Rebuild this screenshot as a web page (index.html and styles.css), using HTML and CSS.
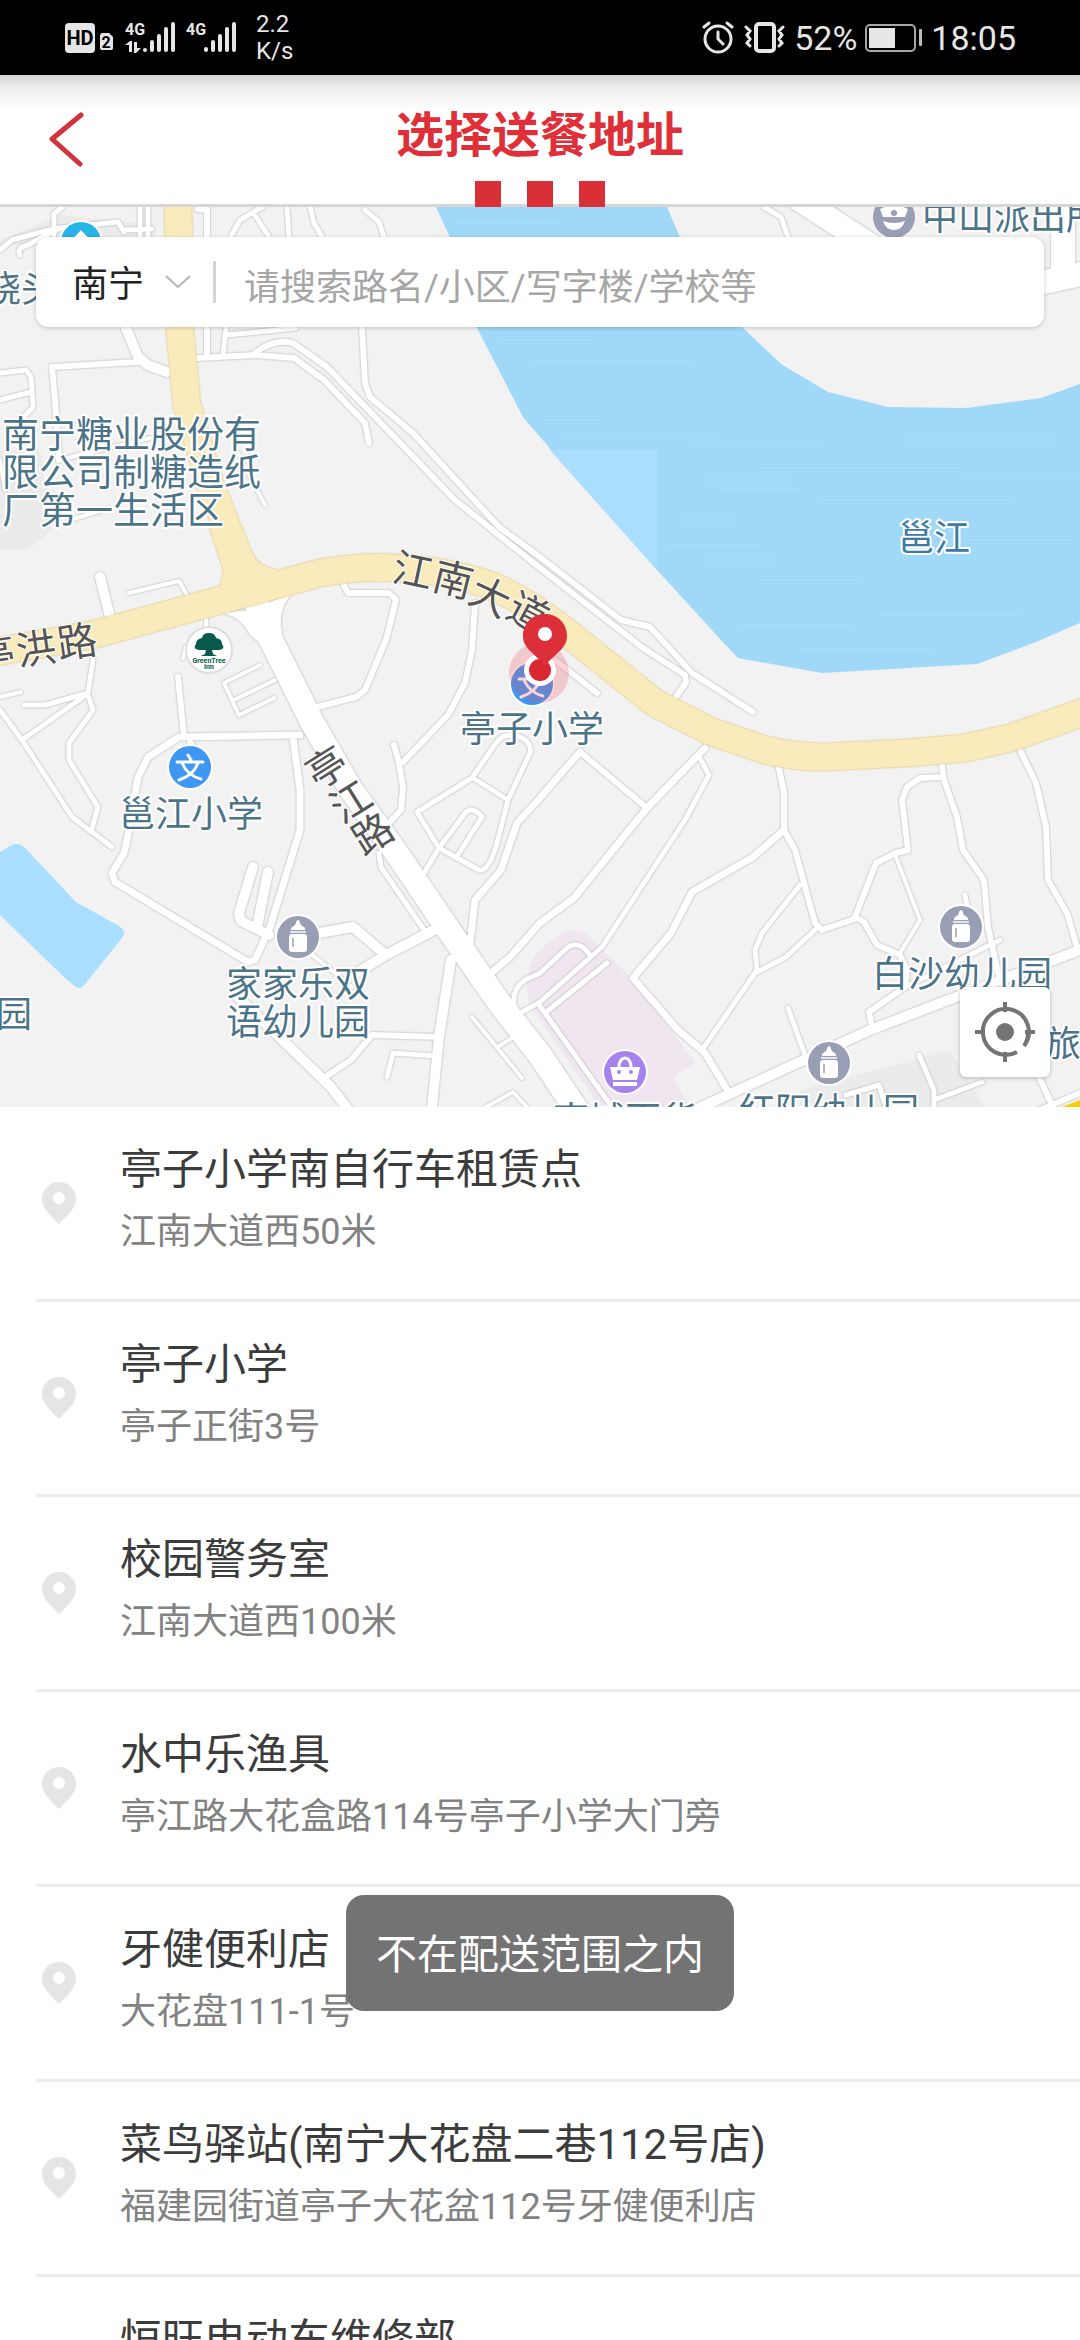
FILE: index.html
```html
<!DOCTYPE html>
<html lang="zh-CN">
<head>
    <meta charset="UTF-8">
    <meta name="viewport" content="width=device-width, initial-scale=1.0">
    <title>选择送餐地址</title>
    <link rel="stylesheet" href="styles.css">
</head>
<body>
    <!-- shared symbols -->
    <svg class="defs" aria-hidden="true">
        <symbol id="pin" viewBox="0 0 34 42">
            <path fill-rule="evenodd" d="M17 0C7.500 0 0 7.500 0 17c0 9 8 16 17 25 9-9 17-16 17-25C34 7.500 26.500 0 17 0zm0 10a6 6 0 1 1 0 12 6 6 0 0 1 0-12z"/>
        </symbol>
        <symbol id="bottle" viewBox="-24 -24 48 48">
            <circle r="23" fill="#fff"/>
            <circle r="21" fill="#989eb4"/>
            <path fill="#fff" d="M0-17c2 0 2 4 3 5l4 3v2H-7v-2l4-3c1-1 1-5 3-5z"/>
            <rect x="-8" y="-6" width="16" height="2" fill="#e4e6ee"/>
            <rect x="-9" y="-3" width="18" height="18" rx="3" fill="#fff"/>
            <path d="M-5 1V10" stroke="#989eb4" stroke-width="1.500"/>
        </symbol>
        <symbol id="school" viewBox="-24 -24 48 48">
            <circle r="23" fill="#fff"/>
            <circle r="21" fill="#3f97f4"/>
            <path d="M-13-5H13M-2-12L1-7M8-4C5 5-2 10-11 13M-8-4C-4 5 3 10 11 12" fill="none" stroke="#fff" stroke-width="3" stroke-linecap="round"/>
        </symbol>
    </svg>

    <div class="app">
        <div class="status-bar">
            <div class="status-group">
                <svg class="status-network" viewBox="64 20 176 36" fill="#e6e6e6">
                    <rect x="65" y="23" width="30" height="30" rx="4"/>
                    <text class="hd" x="80" y="45">HD</text>
                    <path d="M103 33h6l4 4v11a2 2 0 0 1-2 2h-9a2 2 0 0 1-2-2V36a3 3 0 0 1 3-3z"/>
                    <text class="sim" x="106" y="48">2</text>
                    <text class="net" x="125" y="35">4G</text>
                    <path d="M129 52V45h-4l5-4h2v11zM134 42h3v6h4l-5 5h-2z"/>
                    <path d="M145 50V50M152 42V50M159 36V50M166 29V50M173 24V50" class="bars"/>
                    <text class="net" x="186" y="35">4G</text>
                    <path d="M206 49V50M213 42V50M220 36V50M227 29V50M234 24V50" class="bars"/>
                </svg>
                <div class="speed">2.2<br>K/s</div>
            </div>
            <div class="status-group right">
                <svg class="status-alert" viewBox="704 20 84 36" fill="none" stroke="#e6e6e6" stroke-width="3" stroke-linecap="round">
                    <circle cx="720" cy="39" r="13"/>
                    <path d="M720 32V39L725 44M706 27L711 23M734 27L729 23"/>
                    <rect x="758" y="24" width="18" height="27" rx="3" stroke-width="4"/>
                    <path d="M748 27l4 4-3 4 3 4-3 4 3 3M785 27l-4 4 3 4-3 4 3 4-3 3"/>
                </svg>
                <span>52%</span>
                <svg class="status-battery" viewBox="864 23 58 30">
                    <rect x="865" y="25" width="49" height="26" rx="4" fill="none" stroke="#a8a8a8" stroke-width="2"/>
                    <rect x="868" y="28" width="26" height="20" fill="#e6e6e6"/>
                    <rect x="918" y="29" width="3" height="17" rx="1" fill="#bbb"/>
                </svg>
                <span class="time">18:05</span>
            </div>
        </div>

        <header class="header">
            <button class="back" type="button" aria-label="返回">
                <svg viewBox="0 0 36 56"><path d="M33 4L4 28L32 53"/></svg>
            </button>
            <h1>选择送餐地址</h1>
            <div class="awning"><i></i><i></i><i></i></div>
        </header>

        <section class="map">
            <svg class="map-canvas" viewBox="0 207 1080 900" role="img" aria-label="地图">
                <rect y="207" width="1080" height="900" fill="#f2f2f2"/>
                <path d="M0 240L60 215L155 225V245H0zM0 450H40L52 530L28 550H0zM800 1090L950 1050L985 1107H800z" fill="#ebebeb"/>
                <path d="M527 980Q530 950 560 935Q580 924 592 940L631 978L695 1062L673 1077L690 1107H600L540 1020Q525 1000 527 980z" fill="#efe6f0"/>

                <!-- river and pond -->
                <path d="M436 207L449 235L477 328L523 417L540 437L657 570L721 640L738 658L822 673L977 664L1036 642L1080 623V384L1041 398L967 408L888 407L828 392L781 364L743 328L679 235L667 207z" fill="#a0d8f7"/>
                <path d="M549 449H657V570z" fill="#aadeff"/>
                <g class="ripples">
                    <path d="M455 222H560M500 245H640M500 340H590M530 362H690M545 420H600M560 435H720M690 445H820M760 468H960M700 480H790M820 500H1010M680 520H740"/>
                    <path d="M720 490H800M900 440H1060M960 475H1080M700 560H780M760 580H860M880 615H1020M740 625H850M800 650H930M960 540H1070M670 545H760"/>
                </g>
                <path d="M0 852L10 846Q18 841 26 849L76 902L119 926Q127 931 122 938L85 984Q81 990 76 987L65 978L0 915z" fill="#aadeff"/>

                <!-- side streets, grouped by width -->
                <g class="streets">
                    <g stroke-width="4">
                        <path d="M59 460L150 438M238 453L265 505M129 593L179 581L188 597M260 665L224 683L239 715L274 698M234 700L275 680"/>
                        <path d="M896 857L920 920L900 953M183 658L186 647M0 697L21 692M472 1017L522 1078M498 1047L513 1037M486 1107L513 1092L527 1107"/>
                        <path d="M206 615V627M310 953L352 987M70 520L110 508M0 460L5 490"/>
                    </g>
                    <g stroke-width="5">
                        <path d="M54 240V214L62 207M0 250L12 240L45 231L60 228L118 222L124 232M20 255Q16 248 28 245L60 228M140 207V237M148 207V237M124 230L152 229"/>
                        <path d="M231 236L240 220L262 207M253 212L269 237M287 207L289 237M310 207L314 223L322 237M365 210L379 222L384 237"/>
                        <path d="M0 373L26 370L31 377L33 407L21 420M0 400L31 392M226 328L223 355M227 335L296 328"/>
                        <path d="M93 660L88 693L45 705L24 705M86 695L22 740M88 695L93 710L69 743L69 760L98 807L91 832M0 710L22 740L72 817L112 847"/>
                        <path d="M379 853L381 867L424 930M387 1077L393 1053L436 1056M424 873L439 848L466 812Q473 806 482 817L456 858"/>
                        <path d="M439 848L417 812L472 778L496 743Q506 730 522 738Q532 743 530 753L508 800L496 847Q488 872 479 870L439 848M473 778L508 800"/>
                        <path d="M698 755L709 775L685 820L602 947L540 1002L520 1013M515 1010Q510 990 525 980L540 973L568 947Q580 940 590 955M607 963L545 1013M540 1006L609 1103"/>
                        <path d="M800 885L762 933L755 950L757 970L702 1050M817 928L786 957L757 972M788 1008L805 1055M764 207L781 217L788 237M965 895L968 910M1000 940L905 987"/>
                        <path d="M919 1055L934 1090V1107M934 1100L982 1082M846 1095L879 1085L886 1107"/>
                    </g>
                    <g stroke-width="6">
                        <path d="M138 362L52 367L55 400L59 460M198 209L207 210V355M198 358L255 355L294 358L324 380L365 423L369 443"/>
                        <path d="M255 353Q275 338 293 343L327 367L455 500L540 568L643 648L685 675L686 682L674 700"/>
                        <path d="M362 328L365 383L370 397L413 433L499 527L540 557L621 620L650 627L662 640L692 673L753 712"/>
                        <path d="M343 583L348 593H389L396 600L386 640L365 690L356 697L317 707M475 603L472 650L465 683L448 715L403 762M394 745L399 763L403 787L401 810L389 823M178 677L184 737M190 742L196 750"/>
                        <path d="M325 1077L351 1060L372 1035L439 1037M555 660L597 693M580 752L647 808"/>
                        <path d="M778 763L784 793V830L795 850L815 923L822 930L857 918L864 922L877 945L900 955L907 970L905 987L869 1012L872 1027"/>
                        <path d="M855 917L876 863L896 853L908 850L902 800L907 787L920 778L943 777L942 763"/>
                        <path d="M943 777L957 817L963 850L984 880L988 927L998 973M1019 748L1036 783L1046 827L1048 880L1067 913L1077 947M1039 1077L1053 1107M1080 1093L1040 1110"/>
                    </g>
                    <g stroke-width="7">
                        <path d="M300 735L179 737L148 757L138 777L127 840L124 853L112 873L115 882L248 962L255 960L270 927L300 830V790L293 737"/>
                        <path d="M580 752L564 770L540 798L517 823L501 870L475 900L470 943M705 748L647 808L574 898L540 923L510 957L491 973"/>
                        <path d="M784 830L753 857L692 892L671 933L633 978L678 1030L705 1053L726 1088"/>
                    </g>
                    <g stroke-width="10">
                        <path d="M126 328L138 357L148 365L167 372M100 577L110 617M253 867L239 913L241 921L269 935M268 872L257 927M358 972L386 955M319 933L353 927L386 955L434 930M451 960L439 1037L432 1107"/>
                        <path d="M234 993L331 1087L350 1112M1090 946L870 1030L690 1112"/>
                    </g>
                    <g stroke-width="24">
                        <path d="M800 200L870 245M1063 200V272M1040 283L1090 272"/>
                        <path d="M255 600L271 640L312 722L350 788L398 855L448 929L500 1004L540 1055L580 1115"/>
                    </g>
                    <path class="junction" d="M225 613Q242 618 250 634L262 645L282 636Q276 612 290 595L270 602L268 606L245 611z"/>
                </g>

                <!-- avenue -->
                <g class="avenue">
                    <path d="M178 200L180 333L187 405L211 487L240 560L245 585M-10 653L96 634L217 601L320 573Q360 566 396 568Q440 569 490 585Q530 602 570 635L655 703L712 732L765 750Q795 757 825 757L905 753L965 748L1010 738L1090 710"/>
                    <path class="junction" d="M210 527L224 570Q225 586 205 604L260 602L300 590L276 570Q258 568 250 550L241 527z"/>
                </g>
                <path d="M1062 1107L1080 1100V1107z" fill="#f5d000"/>

                <!-- road names follow the bend, one glyph at a time -->
                <g class="road-name">
                    <text transform="translate(413 571) rotate(12)" y="14">江</text>
                    <text transform="translate(453 580) rotate(14)" y="14">南</text>
                    <text transform="translate(490 597) rotate(25)" y="14">大</text>
                    <text transform="translate(528 613) rotate(28)" y="14">道</text>
                    <text transform="translate(-5 655) rotate(-8)" y="14">亭</text>
                    <text transform="translate(36 649) rotate(-8)" y="14">洪</text>
                    <text transform="translate(77 642) rotate(-8)" y="14">路</text>
                    <text transform="translate(327 768) rotate(-32)" y="14">亭</text>
                    <text transform="translate(351 802) rotate(-32)" y="14">江</text>
                    <text transform="translate(373 834) rotate(-32)" y="14">路</text>
                </g>

                <g class="place">
                    <text class="estate" x="2" y="448">南宁糖业股份有</text>
                    <text class="estate" x="2" y="486">限公司制糖造纸</text>
                    <text class="estate" x="2" y="524">厂第一生活区</text>
                    <text x="-15" y="302">饶头</text>
                    <text x="922" y="230">中山派出所</text>
                    <text x="119" y="827">邕江小学</text>
                    <text x="460" y="742">亭子小学</text>
                    <text x="226" y="997">家家乐双</text>
                    <text x="226" y="1035">语幼儿园</text>
                    <text x="-4" y="1027">园</text>
                    <text x="872" y="987">白沙幼儿园</text>
                    <text x="739" y="1124">红阳幼儿园</text>
                    <text x="553" y="1133">南城百货</text>
                    <text x="1045" y="1057">旅馆</text>
                    <text class="river-name" x="898" y="551">邕江</text>
                </g>

                <!-- points of interest -->
                <use href="#school" x="166" y="743" width="48" height="48"/>
                <use href="#school" x="508" y="660" width="48" height="48"/>
                <use href="#bottle" x="274" y="913" width="48" height="48"/>
                <use href="#bottle" x="937" y="903" width="48" height="48"/>
                <use href="#bottle" x="805" y="1039" width="48" height="48"/>
                <g transform="translate(625 1072)">
                    <circle r="23" fill="#fff"/>
                    <circle r="21" fill="#a683ec"/>
                    <path d="M-15-5H15L12 8H-12zM-12 10H12V14H-12z" fill="#fff"/>
                    <path d="M-6-5C-6-17 6-17 6-5" fill="none" stroke="#fff" stroke-width="3"/>
                    <circle cx="-6" r="2" fill="#a683ec"/>
                    <circle cx="6" r="2" fill="#a683ec"/>
                </g>
                <g transform="translate(894 217)">
                    <circle r="21" fill="#989eb4"/>
                    <path d="M-14-8L0-14L14-8L11 0H-11zM-11 4Q0 8 11 4Q8 13 0 13T-11 4z" fill="#fff"/>
                    <circle cy="-4" r="3" fill="#989eb4"/>
                </g>
                <circle cx="81" cy="242" r="22" fill="#fff"/>
                <circle cx="81" cy="242" r="20" fill="#29b4e8"/>
                <path d="M70 242L81 230L92 242z" fill="#fff"/>
                <g transform="translate(209 650)">
                    <circle r="24" fill="#dedede"/>
                    <circle r="22" fill="#fff"/>
                    <path d="M0-17Q6-17 7-12Q13-11 13-6Q17-1 10 0H3L4 4L8 6H-8L-4 4L-3 0H-10Q-17-1-13-6Q-13-11-7-12Q-6-17 0-17z" fill="#0a5a4c"/>
                    <text class="inn" y="13">GreenTree</text>
                    <text class="inn" y="19">Inn</text>
                </g>

                <!-- current position and selected point -->
                <circle cx="539" cy="673" r="30" fill="#e8505a" fill-opacity=".25"/>
                <circle cx="540" cy="670" r="16" fill="#fff"/>
                <circle cx="540" cy="670" r="11" fill="#d92732"/>
                <path d="M545 614C532 614 523 624 523 636C523 649 535 653 545 666C555 653 567 649 567 636C567 624 558 614 545 614z" fill="#dc2f3a"/>
                <circle cx="545" cy="634" r="7" fill="#fff"/>
            </svg>

            <form class="search">
                <label class="city">
                    <select aria-label="城市">
                        <option>南宁</option>
                    </select>
                    <svg viewBox="0 0 26 14"><path d="M1 1L13 12L25 1"/></svg>
                </label>
                <input type="text" aria-label="搜索地址" placeholder="请搜索路名/小区/写字楼/学校等">
            </form>

            <button class="locate" type="button" aria-label="定位">
                <svg viewBox="-30 -30 60 60">
                    <path d="M19 14A23 23 0 1 0 12 20M19 14A23 23 0 0 0 23 0M0-30V-20M0 30V20M-30 0H-20M30 0H20"/>
                    <circle r="9"/>
                </svg>
            </button>
        </section>

        <ul class="address-list">
            <li>
                <svg class="pin"><use href="#pin"/></svg>
                <div><h2>亭子小学南自行车租赁点</h2><p>江南大道西50米</p></div>
            </li>
            <li>
                <svg class="pin"><use href="#pin"/></svg>
                <div><h2>亭子小学</h2><p>亭子正街3号</p></div>
            </li>
            <li>
                <svg class="pin"><use href="#pin"/></svg>
                <div><h2>校园警务室</h2><p>江南大道西100米</p></div>
            </li>
            <li>
                <svg class="pin"><use href="#pin"/></svg>
                <div><h2>水中乐渔具</h2><p>亭江路大花盒路114号亭子小学大门旁</p></div>
            </li>
            <li>
                <svg class="pin"><use href="#pin"/></svg>
                <div><h2>牙健便利店</h2><p>大花盘111-1号</p></div>
            </li>
            <li>
                <svg class="pin"><use href="#pin"/></svg>
                <div><h2>菜鸟驿站(南宁大花盘二巷112号店)</h2><p>福建园街道亭子大花盆112号牙健便利店</p></div>
            </li>
            <li>
                <svg class="pin"><use href="#pin"/></svg>
                <div><h2>恒旺电动车维修部</h2></div>
            </li>
        </ul>

        <div class="toast" role="status">不在配送范围之内</div>
    </div>
</body>
</html>
```

FILE: styles.css
```css
* {
    box-sizing: border-box;
}
body {
    margin: 0;
    background: #fff;
    font-family: Roboto, "Noto Sans CJK SC", sans-serif;
    color: #3c3c3c;
}
button, input, select {
    font-family: inherit;
    border: none;
    background: none;
    padding: 0;
}
.defs {
    position: absolute;
    width: 0;
    height: 0;
}
.app {
    display: flex;
    flex-direction: column;
    height: 100vh;
    overflow: hidden;
}

/* status bar */
.status-bar {
    display: flex;
    flex-shrink: 0;
    justify-content: space-between;
    align-items: center;
    height: 75px;
    padding: 0 64px;
    background: #000;
    color: #e6e6e6;
    font-size: 34px;
}
.status-group {
    display: flex;
    align-items: center;
    gap: 16px;
}
.status-group.right {
    gap: 8px;
}
.status-network {
    width: 176px;
    height: 36px;
}
.status-network .hd {
    font-size: 20px;
    font-weight: 700;
    text-anchor: middle;
    fill: #000;
}
.status-network .sim {
    font-size: 16px;
    font-weight: 700;
    text-anchor: middle;
    fill: #000;
}
.status-network .net {
    font-size: 16px;
    font-weight: 700;
}
.status-network .bars {
    stroke: #e6e6e6;
    stroke-width: 4;
    stroke-linecap: round;
}
.status-alert {
    width: 84px;
    height: 36px;
}
.status-battery {
    width: 58px;
    height: 30px;
}
.speed {
    font-size: 24px;
    line-height: 27px;
}

/* header */
.header {
    position: relative;
    display: flex;
    flex-shrink: 0;
    align-items: center;
    justify-content: center;
    height: 132px;
    padding-bottom: 8px;
    border-bottom: 3px solid #d6d6d6;
    background: linear-gradient(#d4d4d4, #ececec 12px, #fff 36px);
}
.header h1 {
    margin: 0;
    font-size: 48px;
    line-height: 60px;
    color: #df2f39;
}
.back {
    position: absolute;
    left: 48px;
    top: 36px;
    width: 36px;
    height: 56px;
}
.back svg {
    display: block;
    fill: none;
    stroke: #d2323c;
    stroke-width: 5;
    stroke-linecap: round;
    stroke-linejoin: round;
}
.awning {
    position: absolute;
    bottom: -3px;
    left: 0;
    right: 0;
    z-index: 1;
    display: flex;
    justify-content: center;
    gap: 26px;
}
.awning i {
    width: 26px;
    height: 26px;
    background: #d92f37;
}

/* map */
.map {
    position: relative;
    flex-shrink: 0;
}
.map-canvas {
    display: block;
    width: 100%;
}
.streets, .avenue {
    fill: none;
    stroke-linecap: round;
    stroke-linejoin: round;
}
.streets {
    stroke: #fff;
    filter: drop-shadow(0 0 1px #a8a8a8);
}
.streets .junction {
    fill: #fff;
}
.avenue {
    stroke: #faebbc;
    stroke-width: 27;
    filter: drop-shadow(0 0 1px #d8b64e);
}
.avenue .junction {
    fill: #faebbc;
    stroke-width: 1;
}
.ripples {
    stroke: #a6ddfa;
    stroke-width: 3;
    stroke-linecap: round;
    opacity: 0.6;
}
.place, .road-name {
    font-size: 36px;
    stroke: #fff;
    stroke-width: 4;
    stroke-linejoin: round;
    paint-order: stroke;
}
.place {
    fill: #4c7489;
}
.place .estate {
    font-size: 37px;
}
.place .river-name {
    fill: #3c7ba6;
}
.road-name {
    font-size: 40px;
    text-anchor: middle;
    fill: #555;
    stroke-width: 2;
}
.inn {
    font-size: 7px;
    font-weight: 700;
    text-anchor: middle;
    fill: #0a5a4c;
    stroke: none;
}
.search {
    position: absolute;
    top: 30px;
    left: 36px;
    right: 36px;
    display: flex;
    align-items: center;
    height: 90px;
    padding-left: 36px;
    border-radius: 12px;
    background: #fff;
    box-shadow: 0 1px 4px rgba(0,0,0,0.2);
}
.city {
    display: flex;
    align-items: center;
    gap: 20px;
    height: 42px;
    padding-right: 22px;
    border-right: 3px solid #d4d4d4;
}
.city select {
    appearance: none;
    padding-top: 6px;
    font-size: 36px;
    color: #222;
}
.city svg {
    width: 26px;
    height: 14px;
    fill: none;
    stroke: #b4b4b4;
    stroke-width: 2;
}
.search input {
    flex: 1;
    min-width: 0;
    padding: 12px 28px 0;
    font-size: 36px;
}
.search input::placeholder {
    color: #a6a6a6;
}
.locate {
    position: absolute;
    right: 30px;
    bottom: 30px;
    display: flex;
    align-items: center;
    justify-content: center;
    width: 90px;
    height: 90px;
    border-radius: 6px;
    background: #fff;
    box-shadow: 0 1px 4px rgba(0,0,0,0.25);
}
.locate svg {
    width: 60px;
    height: 60px;
    fill: #747474;
}
.locate path {
    fill: none;
    stroke: #747474;
    stroke-width: 4;
}

/* address list */
.address-list {
    flex: 1;
    min-height: 0;
    margin: 0;
    padding: 0 0 0 36px;
    overflow: hidden;
    list-style: none;
}
.address-list li {
    display: flex;
    align-items: center;
    gap: 44px;
    height: 195px;
    padding-left: 6px;
    border-bottom: 3px solid #ededed;
}
.address-list li > div {
    height: 130px;
}
.address-list h2 {
    margin: 0;
    font-size: 42px;
    font-weight: 400;
    line-height: 64px;
}
.address-list p {
    margin: 0;
    font-size: 36px;
    line-height: 60px;
    color: #828282;
}
.pin {
    flex-shrink: 0;
    width: 34px;
    height: 42px;
    fill: #e5e5e5;
}
.toast {
    position: fixed;
    left: 50%;
    bottom: 329px;
    transform: translateX(-50%);
    padding: 30px 30px 26px;
    border-radius: 18px;
    background: #737373;
    color: #fff;
    font-size: 41px;
    line-height: 60px;
    white-space: nowrap;
}
```
